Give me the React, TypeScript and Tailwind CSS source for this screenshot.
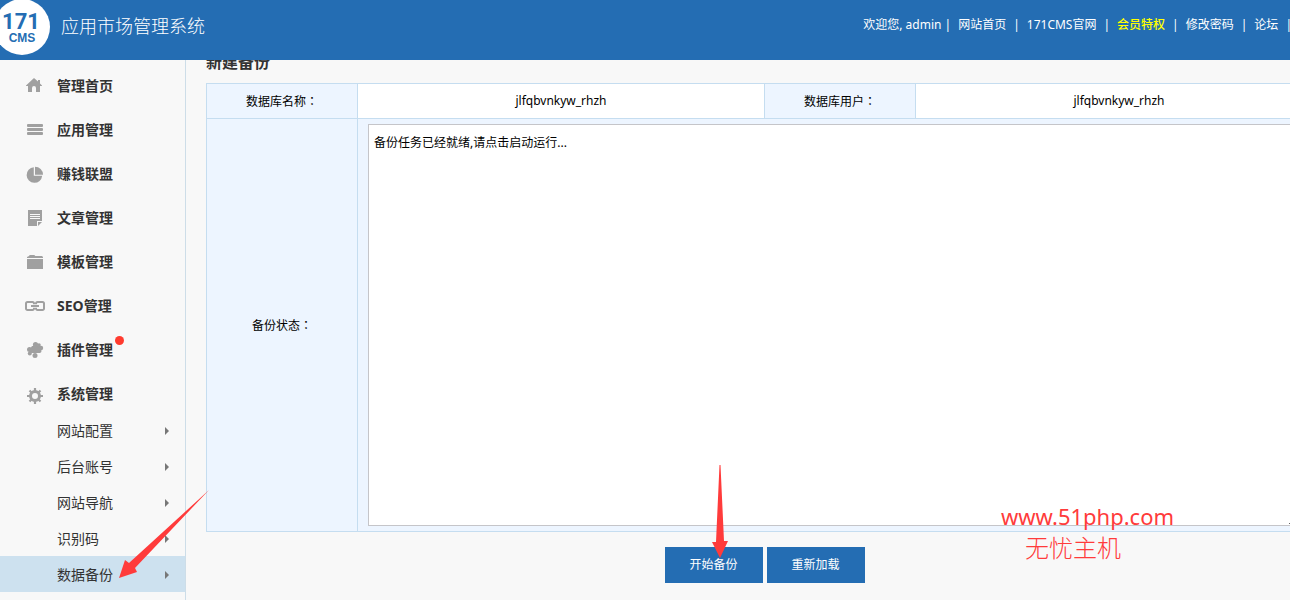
import React, { useState } from 'react';

const menu = [
  { label: '管理首页', icon: 'home' },
  { label: '应用管理', icon: 'list' },
  { label: '赚钱联盟', icon: 'pie' },
  { label: '文章管理', icon: 'note' },
  { label: '模板管理', icon: 'folder' },
  { label: 'SEO管理', icon: 'link' },
  { label: '插件管理', icon: 'plugin', badge: true },
  { label: '系统管理', icon: 'gear' },
];

const subMenu = ['网站配置', '后台账号', '网站导航', '识别码', '数据备份'];

const topLinks = [
  { label: '网站首页' },
  { label: '171CMS官网' },
  { label: '会员特权', highlight: true },
  { label: '修改密码' },
  { label: '论坛' },
];

const icons: Record<string, React.ReactNode> = {
  home: <path d="M9 2 1 9.500V10h2v6h4v-4a2 2 0 0 1 4 0v4h4v-6h2v-.5l-2-2V4h-2v1.600z" />,
  list: (
    <>
      <rect x="2" y="4" width="16" height="3" rx="1" />
      <rect x="2" y="8" width="16" height="3" rx="1" />
      <rect x="2" y="12" width="16" height="3" rx="1" />
    </>
  ),
  pie: (
    <>
      <path d="M8.800 3.300v8.500h8.400A7.800 7.800 0 1 1 8.800 3.300z" />
      <path d="M10 2.700a8 8 0 0 1 8 8h-8z" />
    </>
  ),
  note: (
    <>
      <path d="M3 2h14v11h-5v5H3z" />
      <path d="M13 14h4l-4 4z" />
      <path d="M5 6.500h10M5 8.500h10M5 10.500h10" stroke="#f8f8f8" strokeWidth="1" />
    </>
  ),
  folder: (
    <>
      <path d="M2 6V5l2-1 .7-1h4.600l1 1H17l1 1v1z" />
      <path d="M2 7h16v10H2z" />
    </>
  ),
  link: (
    <g fill="none" stroke="#a0a0a0" strokeWidth="2">
      <path d="M9 8.200V7.500A1.500 1.500 0 0 0 7.500 6h-5A1.500 1.500 0 0 0 1 7.500v5A1.500 1.500 0 0 0 2.500 14h5A1.500 1.500 0 0 0 9 12.500v-.7" />
      <path d="M11 8.200V7.500A1.500 1.500 0 0 1 12.500 6h5A1.500 1.500 0 0 1 19 7.500v5a1.500 1.500 0 0 1-1.500 1.500h-5a1.500 1.500 0 0 1-1.500-1.500v-.7" />
      <path d="M6 10h8" />
    </g>
  ),
  plugin: (
    <>
      <path d="M7 6h8v7H5V9z" />
      <circle cx="10.500" cy="4.500" r="2.600" />
      <circle cx="14" cy="5" r="1.800" />
      <circle cx="16" cy="8" r="2.200" />
      <circle cx="14.500" cy="11" r="2" />
      <circle cx="4.500" cy="9.500" r="2.500" />
      <circle cx="4.800" cy="13.500" r="2" />
      <circle cx="10" cy="15.500" r="2.500" />
    </>
  ),
  gear: (
    <g fill="none" stroke="#a0a0a0">
      <circle cx="10" cy="12" r="4.500" strokeWidth="3" />
      <path
        d="M10 4v3M10 17v3M2 12h3M15 12h3M4.500 6.500l2 2M13.500 15.500l2 2M4.500 17.500l2-2M13.500 8.500l2-2"
        strokeWidth="2.200"
      />
    </g>
  ),
};

function Logo() {
  return (
    <svg className="h-[55px] w-[50px] shrink-0" viewBox="0 0 50 55" role="img" aria-label="171CMS">
      <circle cx="22" cy="27" r="28" fill="#fff" />
      <g fill="#246db3" textAnchor="middle" fontWeight="bold">
        <text x="21" y="29" fontSize="22" fontFamily="'Roboto', sans-serif">171</text>
        <text x="22" y="42" fontSize="12" fontFamily="'Liberation Sans', sans-serif">CMS</text>
      </g>
    </svg>
  );
}

function Header() {
  return (
    <header className="relative z-10 flex h-[60px] items-start justify-between overflow-hidden bg-[#246db3] text-white">
      <div className="flex">
        <Logo />
        <h1 className="ml-[11px] mt-3 text-lg font-light leading-7">应用市场管理系统</h1>
      </div>
      <nav className="-mr-0.5 mt-3 flex gap-[7px] whitespace-nowrap text-xs leading-[26px]">
        <span>欢迎您, admin |</span>
        {topLinks.map((item) => (
          <React.Fragment key={item.label}>
            <a href="#" className={item.highlight ? 'font-medium text-[#ffff00]' : ''}>
              {item.label}
            </a>
            <span>|</span>
          </React.Fragment>
        ))}
      </nav>
    </header>
  );
}

function Sidebar() {
  const [active, setActive] = useState('数据备份');

  return (
    <aside className="w-[186px] shrink-0 border-r border-[#cddde8] pt-2 text-sm text-[#333]">
      <ul className="flex flex-col gap-2">
        {menu.map((item) => (
          <li key={item.label}>
            <a href="#" className="flex h-9 items-center gap-3 pl-[25px] font-bold">
              <svg className="h-5 w-5" viewBox="0 0 20 20" fill="#a0a0a0" aria-hidden="true">
                {icons[item.icon]}
              </svg>
              <span className="relative">
                {item.label}
                {item.badge && (
                  <span className="absolute -right-[11px] -top-1 h-[9px] w-[9px] rounded-full bg-[#ff3b2f]" />
                )}
              </span>
            </a>
          </li>
        ))}
      </ul>
      <ul>
        {subMenu.map((label) => (
          <li key={label}>
            <a
              href="#"
              onClick={() => setActive(label)}
              className={`flex h-9 items-center justify-between pl-[57px] pr-4 pt-0.5 ${
                active === label ? 'bg-[#cde1ef]' : ''
              }`}
            >
              {label}
              <svg className="h-2 w-1" viewBox="0 0 4 8" fill="#777" aria-hidden="true">
                <path d="M0 0l4 4-4 4z" />
              </svg>
            </a>
          </li>
        ))}
      </ul>
    </aside>
  );
}

function FieldName({ text }: { text: string }) {
  return (
    <>
      {text}
      <span className="font-['Noto_Sans_CJK_TC',sans-serif]">：</span>
    </>
  );
}

function BackupPanel() {
  const [status, setStatus] = useState('备份任务已经就绪,请点击启动运行...');
  const th = 'w-[151px] border border-[#c5ddf0] bg-[#edf5ff] font-normal';
  const td = 'border border-[#c5ddf0] bg-white text-center';

  return (
    <main className="-mr-[33px] -mt-[10px] min-w-0 flex-1 pl-5 text-xs text-black">
      <h2 className="mb-[9px] text-base font-bold leading-6 text-[#333]">新建备份</h2>
      <table className="w-full table-fixed border-collapse">
        <tbody>
          <tr className="h-[35px]">
            <th className={th}>
              <FieldName text="数据库名称" />
            </th>
            <td className={td}>jlfqbvnkyw_rhzh</td>
            <th className={th}>
              <FieldName text="数据库用户" />
            </th>
            <td className={td}>jlfqbvnkyw_rhzh</td>
          </tr>
          <tr>
            <th className={th}>
              <label htmlFor="status">
                <FieldName text="备份状态" />
              </label>
            </th>
            <td colSpan={3} className="border border-[#c5ddf0] bg-[#edf5ff] py-[5px] pl-[10px] pr-6">
              <textarea
                id="status"
                value={status}
                onChange={(e) => setStatus(e.target.value)}
                className="block h-[402px] w-full border border-[#c5c5c9] bg-white px-[5px] py-1.5 leading-6"
              />
            </td>
          </tr>
        </tbody>
      </table>
      <div className="mt-[15px] flex justify-center gap-1">
        <button type="button" className="h-9 w-[98px] bg-[#246db3] text-white">
          开始备份
        </button>
        <button type="button" className="h-9 w-[98px] bg-[#246db3] text-white">
          重新加载
        </button>
      </div>
    </main>
  );
}

function App() {
  return (
    <div className="relative min-h-screen overflow-hidden bg-[#f8f8f8] font-['Noto_Sans','Noto_Sans_CJK_SC',sans-serif]">
      <Header />
      <div className="flex min-h-[540px]">
        <Sidebar />
        <BackupPanel />
      </div>

      {/* hand-drawn pointers and site mark over the page */}
      <svg
        className="pointer-events-none absolute left-[119px] top-[490px] h-[89px] w-[91px]"
        viewBox="0 0 91 89"
        fill="#ff3b3b"
        aria-hidden="true"
      >
        <path d="M0 88 6 70l4 3L90 0 16 78l2 4z" />
      </svg>
      <svg
        className="pointer-events-none absolute left-[712px] top-[465px] h-[93px] w-4"
        viewBox="0 0 16 93"
        fill="#ff3b3b"
        aria-hidden="true"
      >
        <path d="M7.500 0h1L12 76h4L8 93 0 77h4z" />
      </svg>
      <div className="pointer-events-none absolute left-[1001px] top-[500px] text-[#ff3b3b]">
        <p className="text-[22px] leading-8">www.51php.com</p>
        <p className="pl-6 text-2xl font-light leading-8">无忧主机</p>
      </div>
    </div>
  );
}

export default App;
